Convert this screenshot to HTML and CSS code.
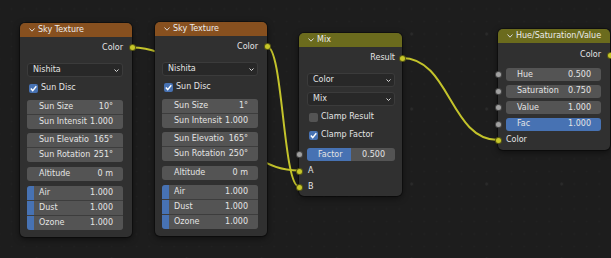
FILE: index.html
```html
<!DOCTYPE html>
<html lang="en">
<head>
<meta charset="utf-8">
<title>Node Editor</title>
<link rel="stylesheet" href="styles.css">
</head>
<body>
<div class="canvas">
  <svg class="wires" width="611" height="258" viewBox="0 0 611 258">
    <path d="M132 47.5 C215 47.5 216 170.5 299 170.5"/>
    <path d="M267 46.5 C283 46.5 283 186.5 299 186.5"/>
    <path d="M402 58 C450 58 450 140 498 140"/>
  </svg>

  <div class="node tex sky n1">
    <div class="hdr"><svg class="chev" width="6" height="4" viewBox="0 0 6 4"><polyline points="0.5,0.5 3,3.2 5.5,0.5"/></svg><span>Sky Texture</span></div>
    <div class="body">
      <div class="row out">Color<i class="sock yel"></i></div>
      <div class="select"><span>Nishita</span><svg class="caret" width="5" height="3" viewBox="0 0 5 3"><polyline points="0.5,0.5 2.5,2.5 4.5,0.5"/></svg></div>
      <div class="check on"><span class="box"><svg width="9" height="9" viewBox="0 0 9 9"><polyline points="1.8,4.6 3.7,6.6 7.3,2.3"/></svg></span>Sun Disc</div>
      <div class="group g-a">
        <div class="field"><span>Sun Size</span><span>10°</span></div>
        <div class="field"><span>Sun Intensit</span><span>1.000</span></div>
      </div>
      <div class="group g-b">
        <div class="field"><span>Sun Elevatio</span><span>165°</span></div>
        <div class="field"><span>Sun Rotation</span><span>251°</span></div>
      </div>
      <div class="field solo alt"><span>Altitude</span><span>0 m</span></div>
      <div class="group g-c">
        <div class="field slider" style="--v:7px"><span>Air</span><span>1.000</span></div>
        <div class="field slider" style="--v:7px"><span>Dust</span><span>1.000</span></div>
        <div class="field slider" style="--v:7px"><span>Ozone</span><span>1.000</span></div>
      </div>
    </div>
  </div>

  <div class="node tex sky n2">
    <div class="hdr"><svg class="chev" width="6" height="4" viewBox="0 0 6 4"><polyline points="0.5,0.5 3,3.2 5.5,0.5"/></svg><span>Sky Texture</span></div>
    <div class="body">
      <div class="row out">Color<i class="sock yel"></i></div>
      <div class="select"><span>Nishita</span><svg class="caret" width="5" height="3" viewBox="0 0 5 3"><polyline points="0.5,0.5 2.5,2.5 4.5,0.5"/></svg></div>
      <div class="check on"><span class="box"><svg width="9" height="9" viewBox="0 0 9 9"><polyline points="1.8,4.6 3.7,6.6 7.3,2.3"/></svg></span>Sun Disc</div>
      <div class="group g-a">
        <div class="field"><span>Sun Size</span><span>1°</span></div>
        <div class="field"><span>Sun Intensit</span><span>1.000</span></div>
      </div>
      <div class="group g-b">
        <div class="field"><span>Sun Elevatio</span><span>165°</span></div>
        <div class="field"><span>Sun Rotation</span><span>250°</span></div>
      </div>
      <div class="field solo alt"><span>Altitude</span><span>0 m</span></div>
      <div class="group g-c">
        <div class="field slider" style="--v:7px"><span>Air</span><span>1.000</span></div>
        <div class="field slider" style="--v:7px"><span>Dust</span><span>1.000</span></div>
        <div class="field slider" style="--v:7px"><span>Ozone</span><span>1.000</span></div>
      </div>
    </div>
  </div>

  <div class="node col mix">
    <div class="hdr"><svg class="chev" width="6" height="4" viewBox="0 0 6 4"><polyline points="0.5,0.5 3,3.2 5.5,0.5"/></svg><span>Mix</span></div>
    <div class="body">
      <div class="row out">Result<i class="sock yel"></i></div>
      <div class="select sel-a"><span>Color</span><svg class="caret" width="5" height="3" viewBox="0 0 5 3"><polyline points="0.5,0.5 2.5,2.5 4.5,0.5"/></svg></div>
      <div class="select sel-b"><span>Mix</span><svg class="caret" width="5" height="3" viewBox="0 0 5 3"><polyline points="0.5,0.5 2.5,2.5 4.5,0.5"/></svg></div>
      <div class="check chk-a"><span class="box"></span>Clamp Result</div>
      <div class="check on chk-b"><span class="box"><svg width="9" height="9" viewBox="0 0 9 9"><polyline points="1.8,4.6 3.7,6.6 7.3,2.3"/></svg></span>Clamp Factor</div>
      <div class="field solo slider fac" style="--v:50%"><i class="sock gry"></i><span>Factor</span><span>0.500</span></div>
      <div class="row in in-a"><i class="sock yel"></i>A</div>
      <div class="row in in-b"><i class="sock yel"></i>B</div>
    </div>
  </div>

  <div class="node col hsv">
    <div class="hdr"><svg class="chev" width="6" height="4" viewBox="0 0 6 4"><polyline points="0.5,0.5 3,3.2 5.5,0.5"/></svg><span>Hue/Saturation/Value</span></div>
    <div class="body">
      <div class="row out">Color<i class="sock yel"></i></div>
      <div class="fields">
        <div class="field solo"><i class="sock gry"></i><span>Hue</span><span>0.500</span></div>
        <div class="field solo"><i class="sock gry"></i><span>Saturation</span><span>0.750</span></div>
        <div class="field solo"><i class="sock gry"></i><span>Value</span><span>1.000</span></div>
        <div class="field solo slider" style="--v:100%"><i class="sock gry"></i><span>Fac</span><span>1.000</span></div>
      </div>
      <div class="row in"><i class="sock yel"></i>Color</div>
    </div>
  </div>
</div>
</body>
</html>
```

FILE: styles.css
```css
* { box-sizing: border-box; margin: 0; padding: 0; }

html, body {
  width: 611px;
  height: 258px;
  overflow: hidden;
  background: #1d1d1d;
}

body {
  font-family: "DejaVu Sans", "Liberation Sans", sans-serif;
  font-size: 8px;
  line-height: 1;
  color: #e4e4e4;
}

.canvas {
  position: relative;
  width: 611px;
  height: 258px;
  background:
    radial-gradient(circle, #2b2b2b 0 1px, rgba(43,43,43,0) 1.7px) -0.8px -3.5px / 75px 75px,
    radial-gradient(circle, #222222 0 0.6px, rgba(34,34,34,0) 1.1px) 5.45px 2.75px / 12.5px 12.5px,
    #1d1d1d;
}

.wires {
  position: absolute;
  left: 0;
  top: 0;
}
.wires path {
  fill: none;
  stroke: #c3c32b;
  stroke-width: 2;
}

/* nodes placed on the free canvas */
.node {
  position: absolute;
  width: 112px;
  background: #303030;
  border-radius: 5px;
  box-shadow: 0 0 0 1px rgba(0, 0, 0, 0.35), 0 2px 6px rgba(0, 0, 0, 0.55);
  --pl: 7px;
  --pr: 9px;
}
.n1 { left: 20px; top: 23px; height: 214px; }
.n2 { left: 155px; top: 22px; height: 214px; }
.mix { left: 299px; top: 33px; width: 103px; height: 163px; --pl: 8px; --pr: 7px; }
.hsv { left: 498px; top: 29px; width: 112px; height: 121px; --pl: 8px; --pr: 9px; }

.hdr {
  height: 14px;
  border-radius: 5px 5px 0 0;
  display: flex;
  align-items: center;
  gap: 3px;
  padding-left: 9px;
  color: #ececec;
  white-space: nowrap;
  overflow: hidden;
}
.tex .hdr { background: #87501f; }
.col .hdr { background: #6b6b1d; }

.chev polyline, .caret polyline {
  fill: none;
  stroke: #d8d8d8;
  stroke-width: 1;
}

.body {
  display: flex;
  flex-direction: column;
  padding: 0 var(--pr) 0 var(--pl);
}

.row {
  position: relative;
  height: 14px;
  display: flex;
  align-items: center;
}
.out { justify-content: flex-end; }

/* sockets sit on the node border */
.sock {
  position: absolute;
  top: 50%;
  width: 7px;
  height: 7px;
  margin-top: -3.5px;
  border-radius: 50%;
  border: 1px solid rgba(0, 0, 0, 0.55);
}
.sock.yel { background: #c7c729; }
.sock.gry { background: #a1a1a1; }
.out .sock { right: calc(-1 * var(--pr) - 3.5px); }
.in .sock, .field .sock { left: calc(-1 * var(--pl) - 3.5px); }

.select {
  height: 14px;
  background: #282828;
  border: 1px solid #3b3b3b;
  border-radius: 3px;
  display: flex;
  justify-content: space-between;
  align-items: center;
  padding: 0 3px 0 5px;
}
.caret { margin-top: 1px; }

.check {
  height: 14px;
  display: flex;
  align-items: center;
  gap: 3px;
  padding-left: 2px;
}
.check .box {
  width: 9px;
  height: 9px;
  border-radius: 2px;
  background: #545454;
  display: flex;
}
.check.on .box { background: #4772b3; }
.check .box polyline {
  fill: none;
  stroke: #ffffff;
  stroke-width: 1.4;
}

.group {
  display: flex;
  flex-direction: column;
  gap: 1px;
  background: #3d3d3d;
  border-radius: 3px;
  overflow: hidden;
}

.field {
  position: relative;
  height: 14px;
  background: #545454;
  display: flex;
  justify-content: space-between;
  align-items: center;
  padding: 0 10px 0 12px;
  white-space: nowrap;
}
.field.solo { border-radius: 3px; }
.field.slider {
  background: linear-gradient(to right, #4772b3 var(--v), #545454 var(--v));
}

/* Sky Texture vertical rhythm */
.sky .out { margin-top: 4px; height: 13px; }
.sky .select { margin-top: 9px; }
.sky .check { margin-top: 4px; }
.sky .g-a { margin-top: 5px; }
.sky .g-b { margin-top: 4px; }
.sky .alt { margin-top: 5px; }
.sky .g-c { margin-top: 5px; }

/* Mix */
.mix .out { margin-top: 4px; }
.mix .sel-a { margin-top: 8px; }
.mix .sel-b { margin-top: 5px; }
.mix .chk-a { margin-top: 4px; }
.mix .chk-b { margin-top: 4px; }
.mix .fac { margin-top: 6px; height: 13px; padding: 0 10px 0 11px; }
.mix .in { padding-left: 1px; }
.mix .in-a { margin-top: 3px; }
.mix .in-b { margin-top: 2px; }

/* Hue/Saturation/Value */
.hsv .out { margin-top: 5px; }
.hsv .fields {
  margin-top: 6px;
  display: flex;
  flex-direction: column;
  gap: 3.5px;
}
.hsv .field { height: 13px; padding: 0 10px 0 11px; }
.hsv .in { margin-top: 2.5px; }
```
